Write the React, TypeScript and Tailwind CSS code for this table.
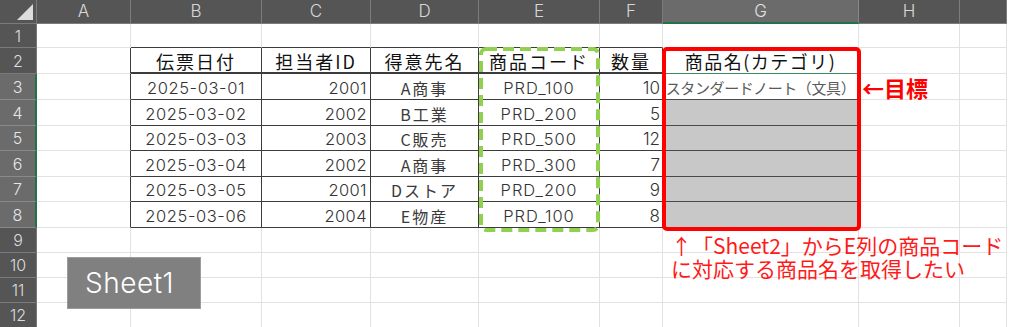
import React from "react";

const FONT = { fontFamily: '"Noto Sans CJK JP", "Noto Sans", sans-serif' };
const LATIN = { fontFamily: 'Inter, "Noto Sans CJK JP", sans-serif' };

const colLetters = ["A", "B", "C", "D", "E", "F", "G", "H", ""];
const data: [string, string, string, string, string][] = [
  ["2025-03-01", "2001", "A商事", "PRD_100", "10"],
  ["2025-03-02", "2002", "B工業", "PRD_200", "5"],
  ["2025-03-03", "2003", "C販売", "PRD_500", "12"],
  ["2025-03-04", "2002", "A商事", "PRD_300", "7"],
  ["2025-03-05", "2001", "Dストア", "PRD_200", "9"],
  ["2025-03-06", "2004", "E物産", "PRD_100", "8"],
];

function RowHeader({ n }: { n: number }) {
  const sel = n >= 3 && n <= 8;
  return (
    <div
      style={LATIN}
      className={
        sel
          ? "flex items-center justify-center leading-none font-light bg-[#6b6b6b] text-[#e6e6e6] text-[16px] border-b border-[#8a8a8a] border-r-2 border-r-[#217346]"
          : "flex items-center justify-center leading-none font-light bg-[#555555] text-[#dcdcdc] text-[16px] border-b border-[#7a7a7a] border-r border-r-[#777777]"
      }
    >
      {n}
    </div>
  );
}

function Cell({ r, c }: { r: number; c: number }) {
  const inTable = r >= 2 && r <= 8 && c >= 1 && c <= 5;
  let cls = "flex items-center leading-none whitespace-nowrap ";
  if (inTable || (c === 0 && r >= 2 && r <= 8)) cls += "border-r border-r-[#3c3c3c] ";
  else cls += "border-r border-r-[#e2e2e2] ";
  if (r === 2 && c >= 1 && c <= 5) cls += "border-b-2 border-b-[#3c3c3c] ";
  else if (inTable) cls += "border-b border-b-[#3c3c3c] ";
  else if (r === 1 && c >= 1 && c <= 5) cls += "border-b border-b-[#3c3c3c] ";
  else if (c === 6 && r === 2) cls += "border-b border-b-[#3d8b5c] ";
  else if (c === 6 && r >= 3 && r <= 8) cls += "border-b border-b-[#4a4a4a] ";
  else cls += "border-b border-b-[#e2e2e2] ";
  if (c === 6 && r >= 4 && r <= 8) cls += "bg-[#c8c8c8] ";
  else cls += "bg-white ";

  let content: React.ReactNode = null;
  let style: React.CSSProperties | undefined;
  if (r === 2) {
    const heads = ["伝票日付", "担当者ID", "得意先名", "商品コード", "数量"];
    if (c >= 1 && c <= 5) {
      cls += "justify-center pt-[1px] text-[18px] tracking-[2px] text-[#111111] ";
      content = heads[c - 1];
    } else if (c === 6) {
      cls += "justify-center pt-[1px] text-[18px] tracking-[1.5px] text-[#111111] ";
      content = "商品名(カテゴリ)";
    }
  } else if (r >= 3 && r <= 8) {
    const d = data[r - 3];
    if (c === 1) {
      cls += "justify-center pt-[3px] text-[16.5px] font-light tracking-[0.6px] text-[#333333] ";
      style = LATIN;
      content = d[0];
    } else if (c === 2) {
      cls += "justify-end pr-[3px] pt-[3px] text-[16.5px] font-light tracking-[0.4px] text-[#333333] ";
      style = LATIN;
      content = d[1];
    } else if (c === 3) {
      cls += "justify-center pt-[2px] text-[16px] tracking-[2px] text-[#3a3a3a] ";
      content = d[2];
    } else if (c === 4) {
      cls += "justify-center pt-[3px] text-[16.5px] font-light tracking-[1px] text-[#333333] ";
      style = LATIN;
      content = d[3];
    } else if (c === 5) {
      cls += "justify-end pr-[2px] pt-[3px] text-[17px] font-light text-[#333333] ";
      style = LATIN;
      content = d[4];
    } else if (c === 6 && r === 3) {
      cls += "justify-center pt-[1px] text-[15px] tracking-[-0.4px] text-[#5a5a5a] ";
      content = "スタンダードノート（文具）";
    }
  }
  return (
    <div className={cls} style={style}>
      {content}
    </div>
  );
}

export default function App() {
  const rows = Array.from({ length: 12 }, (_, i) => i + 1);
  return (
    <div className="relative w-[1024px] h-[327px] overflow-hidden bg-white" style={FONT}>
      <div className="grid w-[1007px] grid-cols-[37px_94px_131px_109px_108px_121px_63px_196px_101px_47px] grid-rows-[24px_24px_26px_26px_26px_25px_26px_25px_26px_25px_25px_25px_25px]">
        <div className="relative bg-[#555555] border-r border-b border-[#7a7a7a]">
          <svg className="absolute left-0 top-0" width="36" height="24" viewBox="0 0 36 24">
            <polygon points="33,4 33,20 17,20" fill="#dcdcdc" />
          </svg>
        </div>
        {colLetters.map((l, i) =>
          i === 6 ? (
            <div
              key={i}
              style={LATIN}
              className="flex items-center justify-center leading-none font-light bg-[#6b6b6b] text-[#e2e2e2] text-[17px] border-r border-r-[#888888] border-b-2 border-b-[#217346]"
            >
              {l}
            </div>
          ) : (
            <div
              key={i}
              style={LATIN}
              className="flex items-center justify-center leading-none font-light bg-[#555555] text-[#d8d8d8] text-[17px] border-r border-r-[#7c7c7c] border-b border-b-[#7c7c7c]"
            >
              {l}
            </div>
          )
        )}
        {rows.map((r) => (
          <React.Fragment key={r}>
            <RowHeader n={r} />
            {Array.from({ length: 9 }, (_, c) => (
              <Cell key={c} r={r} c={c} />
            ))}
          </React.Fragment>
        ))}
      </div>

      {/* green dashed highlight around E2:E8 */}
      <svg className="absolute left-[479px] top-[47px]" width="121" height="185" viewBox="0 0 121 185">
        <rect
          x="2"
          y="2"
          width="117"
          height="181"
          rx="5"
          fill="none"
          stroke="#92d050"
          strokeWidth="4"
          strokeDasharray="11 6"
        />
      </svg>

      {/* red box around G2:G8 */}
      <div className="absolute left-[662px] top-[47px] w-[199px] h-[184px] border-[4px] border-[#ff0000] rounded-[5px]" />

      {/* ←目標 */}
      <div className="absolute left-[862px] top-[74px] text-[22px] leading-[26px] font-bold text-[#ff0000]">
        ←目標
      </div>

      {/* annotation */}
      <div className="absolute left-[671px] top-[234px] flex flex-col text-[21px] leading-[23px] text-[#ff1a1a] whitespace-nowrap">
        <div>↑「Sheet2」からE列の商品コード</div>
        <div>に対応する商品名を取得したい</div>
      </div>

      {/* Sheet1 label */}
      <div
        style={LATIN}
        className="absolute left-[67px] top-[257px] w-[134px] h-[52px] bg-[#808080] border border-[#9c9c9c] flex items-center pl-[17px] text-white text-[28px] font-light tracking-[0.5px]"
      >
        Sheet1
      </div>
    </div>
  );
}
